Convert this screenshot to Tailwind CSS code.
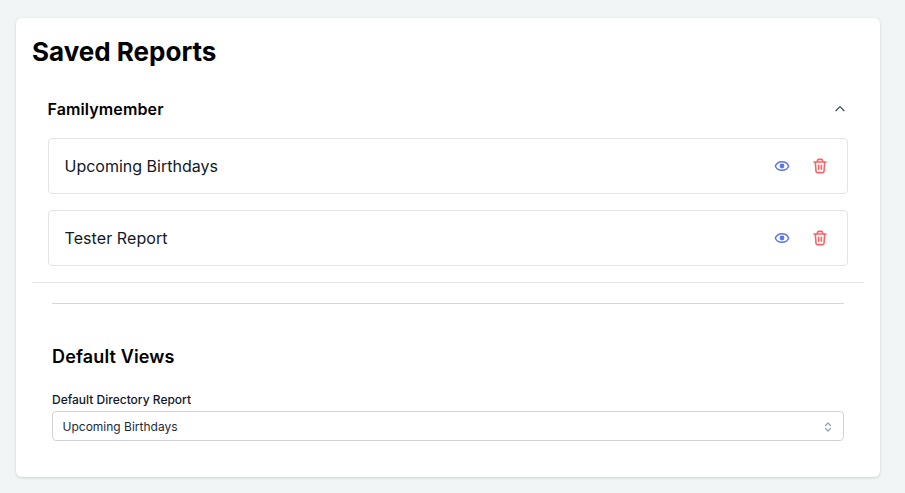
<!DOCTYPE html>
<html lang="en">

<head>
    <meta charset="UTF-8" />
    <title>Saved Reports</title>
    <script src="https://cdn.jsdelivr.net/npm/@tailwindcss/browser@4"></script>
</head>

<body class="h-[493px] overflow-hidden bg-[#f1f5f6] pt-[18px] pl-4 pr-[25px] font-['Inter',sans-serif] text-black">
    <div class="h-[459px] rounded-md bg-white px-4 pt-[16px] shadow-[0_1px_3px_rgba(0,0,0,0.15)]">
        <h1 class="text-[26px] leading-[36px] font-bold">Saved Reports</h1>

        <div class="border-b border-[#e2e4e9] pb-4">
            <div class="flex h-[38px] items-center justify-between pl-[15.5px] pr-[17px] mt-[20px]">
                <h2 class="text-base font-semibold tracking-[0.12px]">Familymember</h2>
                <svg class="w-3.5 h-3.5 text-gray-700" viewBox="0 0 24 24" fill="none" stroke="currentColor" stroke-width="2" stroke-linecap="round" stroke-linejoin="round">
                    <path d="M5 15l7-7 7 7" />
                </svg>
            </div>

            <div class="mt-[10px] ml-4 mr-4 flex flex-col gap-4">
                <div class="flex h-14 items-center justify-between rounded border border-[#e2e4e9] pl-[15.500px] pr-[19px]">
                    <span class="text-base text-[#111827]">Upcoming Birthdays</span>
                    <div class="flex items-center gap-[22px]">
                        <svg class="w-4 h-4 text-[#5b73f5]" viewBox="0 0 24 24" fill="none" stroke="currentColor" stroke-width="2.200" stroke-linecap="round" stroke-linejoin="round">
                            <path d="M2 12C3.500 8 7.500 5.500 12 5.500S20.500 8 22 12C20.500 16 16.500 18.500 12 18.500S3.500 16 2 12z" />
                            <circle cx="12" cy="12" r="2.500" fill="currentColor" />
                        </svg>
                        <svg class="w-4 h-4 text-[#f56565]" viewBox="0 0 24 24" fill="none" stroke="currentColor" stroke-width="2.400" stroke-linecap="round" stroke-linejoin="round">
                            <path d="M3 6h18M8 6V4a2 2 0 0 1 2-2h4a2 2 0 0 1 2 2v2M19 6l-1 14a2 2 0 0 1-2 2H8a2 2 0 0 1-2-2L5 6M10 11v6M14 11v6" />
                        </svg>
                    </div>
                </div>
                <div class="flex h-14 items-center justify-between rounded border border-[#e2e4e9] pl-[15.500px] pr-[19px]">
                    <span class="text-base tracking-[0.08px] text-[#111827]">Tester Report</span>
                    <div class="flex items-center gap-[22px]">
                        <svg class="w-4 h-4 text-[#5b73f5]" viewBox="0 0 24 24" fill="none" stroke="currentColor" stroke-width="2.200" stroke-linecap="round" stroke-linejoin="round">
                            <path d="M2 12C3.500 8 7.500 5.500 12 5.500S20.500 8 22 12C20.500 16 16.500 18.500 12 18.500S3.500 16 2 12z" />
                            <circle cx="12" cy="12" r="2.500" fill="currentColor" />
                        </svg>
                        <svg class="w-4 h-4 text-[#f56565]" viewBox="0 0 24 24" fill="none" stroke="currentColor" stroke-width="2.400" stroke-linecap="round" stroke-linejoin="round">
                            <path d="M3 6h18M8 6V4a2 2 0 0 1 2-2h4a2 2 0 0 1 2 2v2M19 6l-1 14a2 2 0 0 1-2 2H8a2 2 0 0 1-2-2L5 6M10 11v6M14 11v6" />
                        </svg>
                    </div>
                </div>
            </div>
        </div>

        <div class="mx-5 mt-5 border-t border-[#d4d6da] pt-[39px]">
            <h2 class="text-lg leading-[28px] font-semibold tracking-[0.15px]">Default Views</h2>
            <label class="mt-[21px] block text-xs leading-4 font-medium text-[#111827]">Default Directory Report</label>
            <div class="mt-[3px] flex h-[30px] items-center justify-between rounded border border-[#d1d3da] pt-px pl-[9.500px] pr-[9px]">
                <span class="text-xs text-[#1f2937]">Upcoming Birthdays</span>
                <svg class="w-3 h-3 text-gray-400" viewBox="0 0 24 24" fill="none" stroke="currentColor" stroke-width="2.500" stroke-linecap="round" stroke-linejoin="round">
                    <path d="M7 9l5-5 5 5M7 15l5 5 5-5" />
                </svg>
            </div>
        </div>
    </div>
</body>

</html>
